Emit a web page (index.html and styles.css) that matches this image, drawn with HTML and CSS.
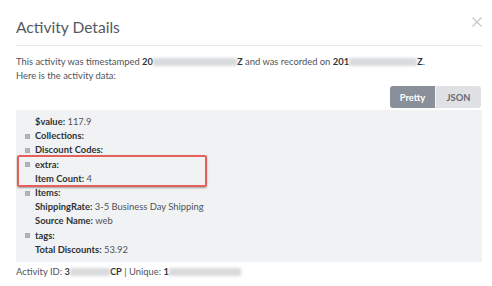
FILE: index.html
```html
<!DOCTYPE html>
<html>
<head>
<meta charset="utf-8">
<link rel="stylesheet" href="styles.css">
</head>
<body>
<div class="modal">
  <div class="header">
    <h1 class="title">Activity Details</h1>
    <svg class="close" width="10" height="10" viewBox="0 0 10 10"><path d="M0.5 0.5 L9.5 9.5 M9.5 0.5 L0.5 9.5" stroke="#c6c8cb" stroke-width="1.3" fill="none"/></svg>
  </div>
  <p class="intro">This activity was timestamped <b>20</b><span class="blur b1"></span><b>Z</b> and was recorded on <b>201</b><span class="blur b2"></span><b>Z</b>.<br>Here is the activity data:</p>
  <div class="toolbar">
    <button class="btn active">Pretty</button><button class="btn">JSON</button>
  </div>
  <div class="panel">
    <div class="row"><span class="key">$value:</span> 117.9</div>
    <div class="row"><span class="plus"></span><span class="key">Collections:</span></div>
    <div class="row"><span class="plus"></span><span class="key">Discount Codes:</span></div>
    <div class="highlight">
      <div class="row"><span class="plus"></span><span class="key">extra:</span></div>
      <div class="row"><span class="key">Item Count:</span> 4</div>
    </div>
    <div class="row"><span class="plus"></span><span class="key">Items:</span></div>
    <div class="row"><span class="key">ShippingRate:</span> 3-5 Business Day Shipping</div>
    <div class="row"><span class="key">Source Name:</span> web</div>
    <div class="row"><span class="plus"></span><span class="key">tags:</span></div>
    <div class="row"><span class="key">Total Discounts:</span> 53.92</div>
  </div>
  <p class="footer">Activity ID: <b>3</b><span class="blur b3"></span><b>CP</b> | Unique: <b>1</b><span class="blur b4"></span></p>
</div>
</body>
</html>
```
FILE: styles.css
```css
* { box-sizing: border-box; }
body {
  margin: 0;
  background: #fff;
  font-family: Lato, "Open Sans", sans-serif;
  color: #505358;
  font-size: 9.4px;
}
.modal {
  padding: 0 10px 0 16px;
}
.header {
  height: 46px;
  border-bottom: 1px solid #e6e7e9;
  display: flex;
  justify-content: space-between;
  align-items: flex-start;
}
.title {
  margin: 18px 0 0 0;
  font-size: 15.6px;
  font-weight: 400;
  color: #55585d;
}
.close {
  margin-top: 17px;
  margin-right: 0;
}
.intro {
  margin: 9px 0 0 0;
  line-height: 14px;
}
b { font-weight: 700; color: #2f3236; }
.blur {
  display: inline-block;
  height: 8px;
  background: #d9dadc;
  filter: blur(1.5px);
  vertical-align: -1px;
}
.b1 { width: 84px; }
.b2 { width: 68px; }
.b3 { width: 40px; }
.b4 { width: 72px; }
.toolbar {
  display: flex;
  justify-content: flex-end;
  margin-top: 3px;
  padding-right: 1px;
}
.btn {
  font-family: inherit;
  font-size: 9.4px;
  font-weight: 700;
  height: 22px;
  width: 45px;
  border: none;
  padding: 0;
  background: #dfe1e4;
  color: #666a70;
}
.btn:first-child { border-radius: 3px 0 0 3px; border-right: 1px solid #f3f4f5; width: 46px; }
.btn:last-child { border-radius: 0 3px 3px 0; }
.btn.active { background: #8a9099; color: #fff; }
.panel {
  margin-top: 2px;
  background: #f1f2f4;
  height: 152px;
  padding: 5px 0 0 9px;
  line-height: 14.2px;
}
.row {
  display: flex;
  align-items: center;
  padding-left: 10px;
  position: relative;
  white-space: pre;
}
.key { font-weight: 700; color: #2f3236; }
.plus {
  position: absolute;
  left: 0;
  top: 4.5px;
  width: 5px;
  height: 5px;
  background: #b2b5ba;
  box-shadow: inset 0 0 0 1px #a9acb1;
}
.highlight {
  position: relative;
}
.highlight::after {
  content: "";
  position: absolute;
  left: -8px;
  width: 186px;
  top: -3px;
  bottom: -1px;
  border: 2px solid #e4605a;
  border-radius: 2px;
  box-shadow: 0 1px 2px rgba(0,0,0,0.35);
}
.footer {
  margin: 3px 0 0 0;
  line-height: 14px;
}
```
